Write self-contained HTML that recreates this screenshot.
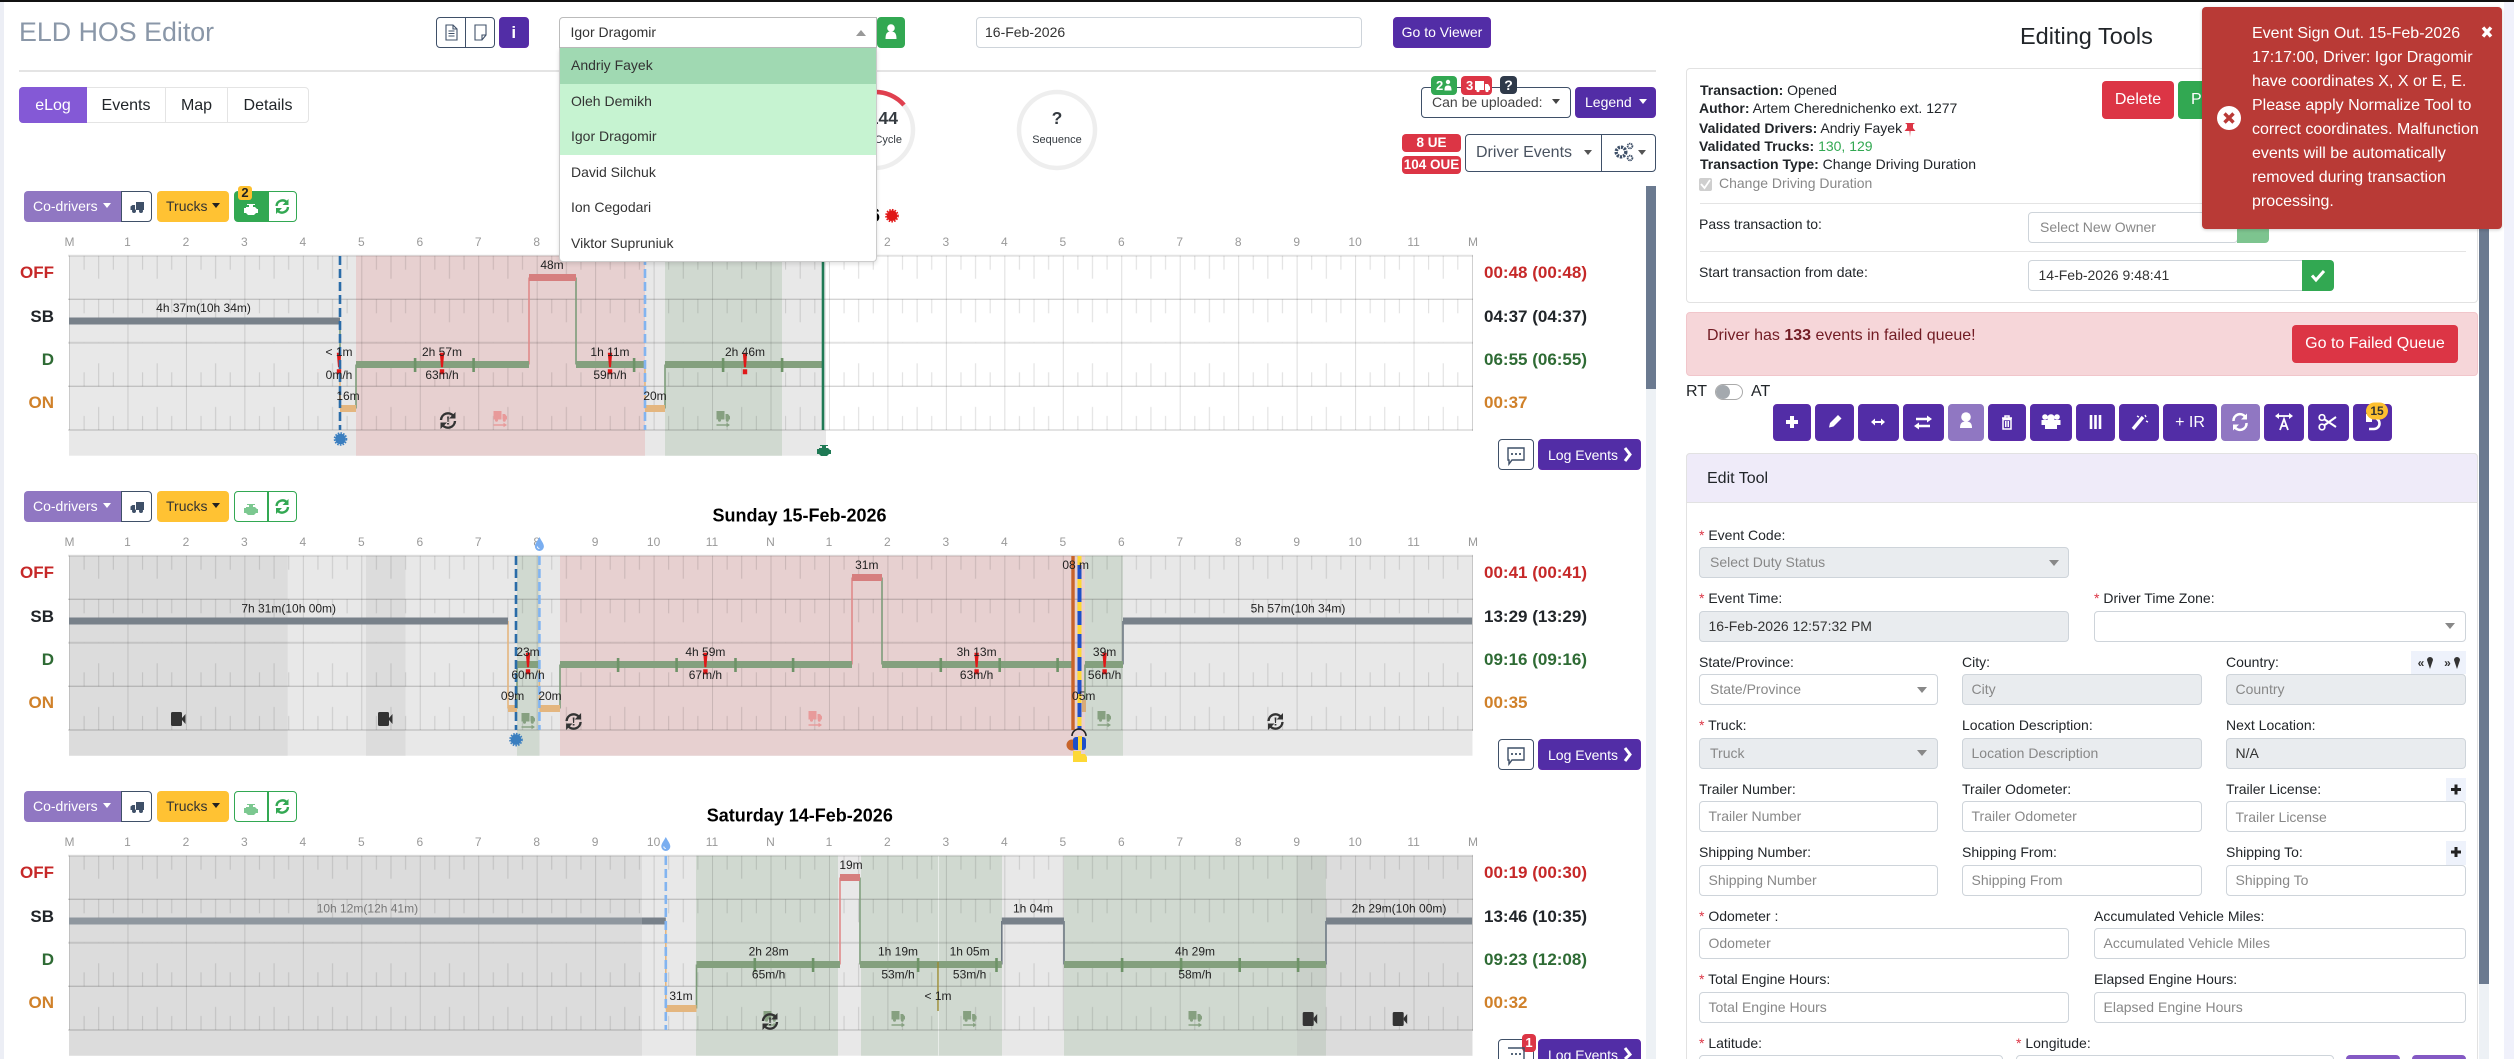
<!DOCTYPE html>
<html><head><meta charset="utf-8"><title>ELD HOS Editor</title>
<style>
html,body{margin:0;padding:0;width:2514px;height:1059px;overflow:hidden}
body{position:relative;background:#fff;font:14px/20px "Liberation Sans",sans-serif;color:#212529}
div,span.a{position:absolute;box-sizing:border-box;white-space:nowrap}
#page{left:0;top:0;width:2514px;height:1059px;overflow:hidden;background:#fff}
.p{background:#522da6;border:1px solid #5c2aa8;border-radius:4px;color:#fff;text-align:center}
.lp{background:#9077c2;border-color:#9077c2}
.o{border:1.5px solid #3f5068;border-radius:4px;background:#fff}
.r{background:#dc3545;border-radius:4px;color:#fff;text-align:center}
.g{background:#32a852;border-radius:4px;color:#fff}
.cr{width:0;height:0;border-left:4.5px solid transparent;border-right:4.5px solid transparent;border-top:5px solid #fff}
.cu{width:0;height:0;border-left:5px solid transparent;border-right:5px solid transparent;border-bottom:6px solid #999}
.cg{width:0;height:0;border-left:5px solid transparent;border-right:5px solid transparent;border-top:6px solid #888}
.f{border:1.5px solid #ced4da;border-radius:4px;height:31px;line-height:29.5px;padding-left:8.5px;color:#888;background:#fff}
.d{background:#e9ecef}
.sel{padding-left:10px}
.dk{color:#333}
.l{height:20px}
.l i{color:#dc3545;font-style:normal}
.opt{left:0;width:100%;height:35.5px;line-height:35px;padding-left:11px;color:#333}
svg{position:absolute;left:0;top:0}
.sb{stroke:#78818a;stroke-width:7;fill:none}
.dr{stroke:#84a07e;stroke-width:7;fill:none}
.of{stroke:#d67e7e;stroke-width:7;fill:none}
.on{stroke:#e4b67f;stroke-width:7;fill:none}
.vd{stroke:#7d9c7a;stroke-width:1.6;fill:none}
.vo{stroke:#e08a8a;stroke-width:1.6;fill:none}
.vn{stroke:#e4b67f;stroke-width:1.6;fill:none}
.vs{stroke:#6f7a84;stroke-width:1.6;fill:none}
.t text,text.t{font:12px "Liberation Sans",sans-serif;fill:#222;text-anchor:middle}
.h text{font:12px "Liberation Sans",sans-serif;fill:#999;text-anchor:middle}
.ti{font:bold 18px "Liberation Sans",sans-serif;fill:#000;text-anchor:middle}
.rl text{font:bold 17px "Liberation Sans",sans-serif;text-anchor:end}
.tl text{font:bold 17px "Liberation Sans",sans-serif}
</style></head><body>
<div id="page">

<svg width="2514" height="1059" viewBox="0 0 2514 1059" style="z-index:1">
<defs>
<pattern id="pt" patternUnits="userSpaceOnUse" x="69" y="255.7" width="58.458" height="43.6">
<rect x="0" y="0" width="1" height="43.6" fill="#000" opacity=".13"/>
<rect x="14.6" y="0" width="1" height="14" fill="#000" opacity=".13"/>
<rect x="29.2" y="0" width="1" height="23" fill="#000" opacity=".13"/>
<rect x="43.8" y="0" width="1" height="14" fill="#000" opacity=".13"/>
</pattern>
<pattern id="pb" patternUnits="userSpaceOnUse" x="69" y="342.7" width="58.458" height="43.65">
<rect x="0" y="0" width="1" height="43.65" fill="#000" opacity=".13"/>
<rect x="14.6" y="29.6" width="1" height="14" fill="#000" opacity=".13"/>
<rect x="29.2" y="20.6" width="1" height="23" fill="#000" opacity=".13"/>
<rect x="43.8" y="29.6" width="1" height="14" fill="#000" opacity=".13"/>
</pattern>
<g id="grid">
<rect x="69" y="255.7" width="1403.5" height="87" fill="url(#pt)"/>
<rect x="69" y="342.7" width="1403.5" height="87.3" fill="url(#pb)"/>
<path d="M68 255.7H1473M68 430H1473M68 342.7H1473" stroke="#000" stroke-opacity=".11" stroke-width="2" fill="none"/>
<path d="M68 299.3H1473M68 386.3H1473" stroke="#000" stroke-opacity=".17" stroke-width="1.3" fill="none"/>
<path d="M1472.5 255V431" stroke="#000" stroke-opacity=".13" stroke-width="1" fill="none"/>
</g>
<g id="tr"><path d="M-6.5-8H1.5V0.500H-6.5ZM2.500-5H5L7-2.500V0.500H2.500Z"/><circle cx="-3.5" cy="1.200" r="1.500"/><circle cx="4.300" cy="1.200" r="1.500"/><path d="M-6.5 6H5" stroke-width="1.400" fill="none" stroke="currentColor"/><path d="M3.500 3.800 7 6 3.500 8.200Z"/></g>
<g id="sy"><path d="M-7-.5A7 7 0 0 1 5.5-4.5M7 .5A7 7 0 0 1-5.5 4.5" fill="none" stroke="#333" stroke-width="2.4"/><path d="M7.5-8.5V-2H1ZM-7.5 8.5V2H-1Z" fill="#333"/><path d="M-.9-4H.9L.5 1.5H-.5ZM-.9 2.5H.9V4H-.9Z" fill="#333"/></g>
<g id="cam"><rect x="-7" y="-7" width="11" height="14" rx="1.5" fill="#333"/><path d="M4-1 7.5-5V5L4 1Z" fill="#333"/></g>
<g id="ex"><path d="M-2.2 97H2.2L1 111.5H-1ZM-2.2 113.5H2.2V118.5H-2.2Z" fill="#e01818" transform="translate(0,255.7)"/></g>
<g id="mk"><rect x="-1.2" y="358" width="2.6" height="14" fill="#6e9368"/></g>
<g id="eng"><path d="M-7-2H-5V-3H-2V-5H-4V-6H4V-5H2V-3H4L6-1H7V3H5L3 5H-3L-5 3H-7Z"/></g>
<g id="drop"><path d="M0-9C2-5 4.5-2.5 4.5.5A4.5 4.5 0 0 1-4.5.5C-4.5-2.5-2-5 0-9Z" fill="#7aaef0"/><path d="M-2 .5A2 2 0 0 0 0 2.5" stroke="#fff" stroke-width="1" fill="none"/></g>
<g id="dot"><circle r="5.3"/><circle r="6" fill="none" stroke="currentColor" stroke-width="1.6" stroke-dasharray="1.6 1.2"/></g>
</defs>

<!-- CHART 1 -->
<g>
<rect x="69" y="255.7" width="757" height="200" fill="#e8e8e8"/>
<rect x="356" y="255.7" width="289" height="200" fill="#e7d0d0"/>
<rect x="665" y="255.7" width="117" height="200" fill="#d0d9d0"/>
<use href="#grid"/>
<g class="h"><text x="69.5" y="246">M</text><text x="127.5" y="246">1</text><text x="186" y="246">2</text><text x="244.4" y="246">3</text><text x="302.8" y="246">4</text><text x="361.3" y="246">5</text><text x="419.8" y="246">6</text><text x="478.2" y="246">7</text><text x="536.7" y="246">8</text><text x="595.1" y="246">9</text><text x="653.6" y="246">10</text><text x="712" y="246">11</text><text x="770.5" y="246">N</text><text x="829" y="246">1</text><text x="887.4" y="246">2</text><text x="945.9" y="246">3</text><text x="1004.3" y="246">4</text><text x="1062.8" y="246">5</text><text x="1121.3" y="246">6</text><text x="1179.7" y="246">7</text><text x="1238.2" y="246">8</text><text x="1296.7" y="246">9</text><text x="1355.1" y="246">10</text><text x="1413.6" y="246">11</text><text x="1473" y="246">M</text></g>
<text x="880" y="221.5" style="font:bold 18px 'Liberation Sans',sans-serif;text-anchor:end">Monday 16-Feb-2026</text>
<use href="#dot" x="892" y="215.7" fill="#e01818" color="#e01818"/>
<path class="vd" d="M340 321V364.5"/><path class="vn" d="M340 364.5V408.5"/><path class="vd" d="M356 408.5V364.5"/><path class="vo" d="M529 364.5V277.5"/><path class="vd" d="M576 277.5V364.5"/><path class="vn" d="M645 364.5V408.5"/><path class="vd" d="M665 408.5V364.5"/>
<path class="sb" d="M69 321H340"/><path class="on" d="M340 408.5H356"/><path class="dr" d="M356 364.5H529"/><path class="of" d="M529 277.5H576"/><path class="dr" d="M576 364.5H645"/><path class="on" d="M645 408.5H665"/><path class="dr" d="M665 364.5H824"/>
<use href="#mk" x="415"/><use href="#mk" x="473.5"/><use href="#mk" x="634"/><use href="#mk" x="723"/><use href="#mk" x="782"/>
<use href="#ex" x="339"/><use href="#ex" x="442"/><use href="#ex" x="610"/><use href="#ex" x="745"/>
<path d="M340 256V430" stroke="#2a6ca8" stroke-width="2.6" stroke-dasharray="9 4" fill="none"/>
<path d="M645 256V430" stroke="#82b4f0" stroke-width="2.6" stroke-dasharray="9 4" fill="none"/>
<path d="M823 256V430" stroke="#1f7a55" stroke-width="2.6" fill="none"/>
<use href="#dot" x="340.5" y="439" fill="#3a7ebf" color="#3a7ebf"/>
<use href="#sy" x="448" y="420.5"/>
<use href="#tr" x="500" y="419" fill="#e89a9a" color="#e89a9a"/>
<use href="#tr" x="723" y="419" fill="#86a080" color="#86a080"/>
<use href="#eng" x="824" y="451" fill="#1f7a55"/>
<g class="t"><text x="203.5" y="312">4h 37m(10h 34m)</text><text x="552" y="269">48m</text><text x="339" y="356">&lt; 1m</text><text x="339" y="379">0m/h</text><text x="442" y="356">2h 57m</text><text x="442" y="379">63m/h</text><text x="610" y="356">1h 11m</text><text x="610" y="379">59m/h</text><text x="745" y="356">2h 46m</text><text x="348" y="400">16m</text><text x="655" y="400">20m</text></g>
<g class="rl"><text x="54" y="278" fill="#c62828">OFF</text><text x="54" y="322" fill="#212529">SB</text><text x="54" y="365" fill="#2e6b34">D</text><text x="54" y="408" fill="#d0812a">ON</text></g>
<g class="tl"><text x="1484" y="278" fill="#c62828">00:48 (00:48)</text><text x="1484" y="322" fill="#212529">04:37 (04:37)</text><text x="1484" y="365" fill="#2e6b34">06:55 (06:55)</text><text x="1484" y="408" fill="#d0812a">00:37</text></g>
</g>

<!-- CHART 2 -->
<g transform="translate(0,300)">
<rect x="69" y="255.7" width="1403.5" height="200" fill="#e8e8e8"/>
<rect x="69" y="255.7" width="218.6" height="200" fill="#dcdcdc"/>
<rect x="366" y="255.7" width="39.5" height="200" fill="#dcdcdc"/>
<rect x="517" y="255.7" width="22.5" height="200" fill="#d0d9d0"/>
<rect x="560" y="255.7" width="525" height="200" fill="#e7d0d0"/>
<rect x="1085" y="255.7" width="38" height="200" fill="#d0d9d0"/>
<use href="#grid"/>
<g class="h"><text x="69.5" y="246">M</text><text x="127.5" y="246">1</text><text x="186" y="246">2</text><text x="244.4" y="246">3</text><text x="302.8" y="246">4</text><text x="361.3" y="246">5</text><text x="419.8" y="246">6</text><text x="478.2" y="246">7</text><text x="536.7" y="246">8</text><text x="595.1" y="246">9</text><text x="653.6" y="246">10</text><text x="712" y="246">11</text><text x="770.5" y="246">N</text><text x="829" y="246">1</text><text x="887.4" y="246">2</text><text x="945.9" y="246">3</text><text x="1004.3" y="246">4</text><text x="1062.8" y="246">5</text><text x="1121.3" y="246">6</text><text x="1179.7" y="246">7</text><text x="1238.2" y="246">8</text><text x="1296.7" y="246">9</text><text x="1355.1" y="246">10</text><text x="1413.6" y="246">11</text><text x="1473" y="246">M</text></g>
<text class="ti" x="799.5" y="221.5">Sunday 15-Feb-2026</text>
<path class="vn" d="M508 321V408.5"/><path class="vd" d="M517 408.5V364.5"/><path class="vn" d="M539.4 364.5V408.5"/><path class="vd" d="M560 408.5V364.5"/><path class="vo" d="M852 364.5V277.5"/><path class="vd" d="M882 277.5V364.5"/><path class="vd" d="M1085 364.5V408.5"/><path class="vs" d="M1123 364.5V321"/>
<path class="sb" d="M69 321H508"/><path class="on" d="M508 408.5H517"/><path class="dr" d="M517 364.5H539.4"/><path class="on" d="M539.4 408.5H560"/><path class="dr" d="M560 364.5H852"/><path class="of" d="M852 277.5H882"/><path class="dr" d="M882 364.5H1072"/><path class="dr" d="M1085 364.5H1123"/><path class="sb" d="M1123 321H1472"/>
<rect x="1082" y="400" width="4" height="12" fill="#d8ac78"/>
<use href="#mk" x="618"/><use href="#mk" x="676.5"/><use href="#mk" x="735.4"/><use href="#mk" x="793"/><use href="#mk" x="940.7"/><use href="#mk" x="999.6"/><use href="#mk" x="1057.5"/>
<use href="#ex" x="528"/><use href="#ex" x="705.4"/><use href="#ex" x="976.6"/><use href="#ex" x="1104.6"/>
<path d="M516 256V430" stroke="#2a6ca8" stroke-width="2.6" stroke-dasharray="9 4" fill="none"/>
<path d="M539.4 256V430" stroke="#82b4f0" stroke-width="2.6" stroke-dasharray="9 4" fill="none"/>
<path d="M1073 256V430" stroke="#c8642a" stroke-width="3.4" fill="none"/>
<path d="M1079.5 256V430" stroke="#fdd835" stroke-width="4" fill="none"/>
<path d="M1079.5 256V430" stroke="#1e50c8" stroke-width="4" stroke-dasharray="14 9" stroke-dashoffset="-9" fill="none"/>
<use href="#drop" x="539.4" y="246"/>
<use href="#dot" x="516" y="439.6" fill="#3a7ebf" color="#3a7ebf"/>
<use href="#cam" x="178" y="419"/><use href="#cam" x="385" y="419"/>
<use href="#tr" x="528" y="421" fill="#86a080" color="#86a080"/>
<use href="#sy" x="573.6" y="421.5"/><use href="#sy" x="1275.5" y="421.5"/>
<use href="#tr" x="815" y="419" fill="#e89a9a" color="#e89a9a"/>
<use href="#tr" x="1104" y="419" fill="#86a080" color="#86a080"/>
<circle cx="1072" cy="445" r="5.5" fill="#c8642a"/>
<rect x="1073" y="437" width="13" height="13" rx="3" fill="#1e50c8"/><rect x="1078" y="436" width="4" height="14" fill="#fdd835"/>
<path d="M1072 436a4 4 0 0 1 14 0" stroke="#222" stroke-width="1.6" fill="none"/>
<path d="M1073 451H1081V454H1085L1087 457V462H1073Z" fill="#fdd835"/>
<g class="t"><text x="288.7" y="312.5">7h 31m(10h 00m)</text><text x="528" y="356">23m</text><text x="528" y="379">60m/h</text><text x="512.6" y="400">09m</text><text x="550" y="400">20m</text><text x="705.4" y="356">4h 59m</text><text x="705.4" y="379">67m/h</text><text x="866.8" y="269">31m</text><text x="976.6" y="356">3h 13m</text><text x="976.6" y="379">63m/h</text><text x="1075.7" y="269">08 m</text><text x="1104.6" y="356">39m</text><text x="1104.6" y="379">56m/h</text><text x="1083.7" y="400">05m</text><text x="1298" y="312.5">5h 57m(10h 34m)</text></g>
<g class="rl"><text x="54" y="278" fill="#c62828">OFF</text><text x="54" y="322" fill="#212529">SB</text><text x="54" y="365" fill="#2e6b34">D</text><text x="54" y="408" fill="#d0812a">ON</text></g>
<g class="tl"><text x="1484" y="278" fill="#c62828">00:41 (00:41)</text><text x="1484" y="322" fill="#212529">13:29 (13:29)</text><text x="1484" y="365" fill="#2e6b34">09:16 (09:16)</text><text x="1484" y="408" fill="#d0812a">00:35</text></g>
</g>

<!-- CHART 3 -->
<g transform="translate(0,600)">
<rect x="69" y="255.7" width="1403.5" height="200" fill="#e8e8e8"/>
<rect x="69" y="255.7" width="573" height="200" fill="#dcdcdc"/>
<rect x="696" y="255.7" width="142" height="200" fill="#d0d9d0"/>
<rect x="861" y="255.7" width="141" height="200" fill="#d0d9d0"/>
<rect x="1064" y="255.7" width="233" height="200" fill="#d0d9d0"/>
<rect x="1297" y="255.7" width="29" height="200" fill="#c9d0c9"/>
<rect x="1326" y="255.7" width="146.5" height="200" fill="#dcdcdc"/>
<rect x="938" y="255.7" width="1" height="200" fill="#e8ece8"/>
<use href="#grid"/>
<g class="h"><text x="69.5" y="246">M</text><text x="127.5" y="246">1</text><text x="186" y="246">2</text><text x="244.4" y="246">3</text><text x="302.8" y="246">4</text><text x="361.3" y="246">5</text><text x="419.8" y="246">6</text><text x="478.2" y="246">7</text><text x="536.7" y="246">8</text><text x="595.1" y="246">9</text><text x="653.6" y="246">10</text><text x="712" y="246">11</text><text x="770.5" y="246">N</text><text x="829" y="246">1</text><text x="887.4" y="246">2</text><text x="945.9" y="246">3</text><text x="1004.3" y="246">4</text><text x="1062.8" y="246">5</text><text x="1121.3" y="246">6</text><text x="1179.7" y="246">7</text><text x="1238.2" y="246">8</text><text x="1296.7" y="246">9</text><text x="1355.1" y="246">10</text><text x="1413.6" y="246">11</text><text x="1473" y="246">M</text></g>
<text class="ti" x="799.8" y="221.5">Saturday 14-Feb-2026</text>
<path class="vn" d="M665.8 321V408.5"/><path class="vd" d="M696.5 408.5V364.5"/><path class="vo" d="M840 364.5V277.5"/><path class="vd" d="M860 277.5V364.5"/><path class="vs" d="M1001.8 364.5V321"/><path class="vs" d="M1064 321V364.5"/><path class="vs" d="M1326 364.5V321"/>
<path class="sb" d="M69 321H642" style="stroke:#8f979f"/><path class="sb" d="M642 321H665.8"/><path class="on" d="M665.8 408.5H696.5"/><path class="dr" d="M696.5 364.5H840"/><path class="of" d="M840 277.5H860"/><path class="dr" d="M860 364.5H1001.8"/><path class="sb" d="M1001.8 321H1064"/><path class="dr" d="M1064 364.5H1326"/><path class="sb" d="M1326 321H1472"/>
<path d="M938 362V411" stroke="#9a8a30" stroke-width="1.4" fill="none"/>
<use href="#mk" x="754.7"/><use href="#mk" x="813"/><use href="#mk" x="918"/><use href="#mk" x="996.4"/><use href="#mk" x="1122"/><use href="#mk" x="1181"/><use href="#mk" x="1239.6"/><use href="#mk" x="1298"/>
<path d="M665.8 256V430" stroke="#82b4f0" stroke-width="2.6" stroke-dasharray="9 4" fill="none"/>
<use href="#drop" x="665.8" y="246"/>
<use href="#tr" x="770" y="419" fill="#86a080" color="#86a080"/>
<use href="#sy" x="770" y="421.5"/>
<use href="#tr" x="898" y="419" fill="#86a080" color="#86a080"/><use href="#tr" x="969.6" y="419" fill="#86a080" color="#86a080"/><use href="#tr" x="1195" y="419" fill="#86a080" color="#86a080"/>
<use href="#cam" x="1309.7" y="419"/><use href="#cam" x="1399.7" y="419"/>
<g class="t"><text x="367.4" y="312.7" style="fill:#777">10h 12m(12h 41m)</text><text x="768.6" y="355.6">2h 28m</text><text x="768.6" y="378.6">65m/h</text><text x="681" y="400">31m</text><text x="851" y="269">19m</text><text x="898" y="355.6">1h 19m</text><text x="898" y="378.6">53m/h</text><text x="969.6" y="355.6">1h 05m</text><text x="969.6" y="378.6">53m/h</text><text x="938" y="400">&lt; 1m</text><text x="1033" y="312.7">1h 04m</text><text x="1195" y="355.6">4h 29m</text><text x="1195" y="378.6">58m/h</text><text x="1399" y="312.7">2h 29m(10h 00m)</text></g>
<g class="rl"><text x="54" y="278" fill="#c62828">OFF</text><text x="54" y="322" fill="#212529">SB</text><text x="54" y="365" fill="#2e6b34">D</text><text x="54" y="408" fill="#d0812a">ON</text></g>
<g class="tl"><text x="1484" y="278" fill="#c62828">00:19 (00:30)</text><text x="1484" y="322" fill="#212529">13:46 (10:35)</text><text x="1484" y="365" fill="#2e6b34">09:23 (12:08)</text><text x="1484" y="408" fill="#d0812a">00:32</text></g>
</g>
</svg>

<!-- frame -->
<div style="left:0;top:0;width:2514px;height:2px;background:#111;z-index:9"></div>
<div style="left:0;top:2px;width:3.5px;height:1057px;background:#eceef5"></div>
<div style="left:2504px;top:2px;width:10px;height:1057px;background:#f0f1fb"></div>
<div style="left:1646px;top:186px;width:10px;height:873px;background:#edf1f5"></div>
<div style="left:1646px;top:186px;width:10px;height:203px;background:#6b7a90"></div>
<div style="left:2479px;top:60px;width:10px;height:999px;background:#edf1f5"></div>
<div style="left:2479px;top:60px;width:10px;height:924px;background:#6b7a90"></div>

<!-- header -->
<div style="left:19px;top:12px;height:40px;line-height:40px;font-size:26.8px;color:#8a97a8">ELD HOS Editor</div>
<div style="left:19px;top:70px;width:1637px;height:2px;background:#e4e4e4"></div>
<div class="o" style="left:436px;top:17px;width:29.5px;height:31px;border-radius:4px 0 0 4px"></div>
<div class="o" style="left:465px;top:17px;width:29.5px;height:31px;border-radius:0 4px 4px 0"></div>
<div class="p" style="left:498.7px;top:17px;width:30px;height:31px;line-height:29px;font-weight:bold;font-size:17px">i</div>
<div class="f dk" style="left:559px;top:17px;width:318px;padding-left:10.5px;border-radius:4px 0 0 0;border-color:#bbb">Igor Dragomir</div>
<div class="cu" style="left:856px;top:30px"></div>
<div class="g" style="left:877px;top:17px;width:28px;height:31px"></div>
<div class="f dk" style="left:976px;top:17px;width:386px;padding-left:8px">16-Feb-2026</div>
<div class="p" style="left:1393px;top:17px;width:98px;height:31px;line-height:28px">Go to Viewer</div>

<!-- tabs -->
<div style="left:19px;top:87px;width:290px;height:36px;border:1.5px solid #e4e4e4;border-radius:4px"></div>
<div style="left:19px;top:87px;width:68px;height:36px;background:#8459d6;color:#fff;font-size:16px;line-height:37px;text-align:center;border-radius:4px 0 0 4px">eLog</div>
<div style="left:87px;top:87px;width:79px;height:36px;font-size:16px;line-height:37px;text-align:center;border-right:1.5px solid #e4e4e4">Events</div>
<div style="left:166px;top:87px;width:62px;height:36px;font-size:16px;line-height:37px;text-align:center;border-right:1.5px solid #e4e4e4">Map</div>
<div style="left:228px;top:87px;width:80px;height:36px;font-size:16px;line-height:37px;text-align:center">Details</div>

<!-- top-right of left pane -->
<div class="o" style="left:1421px;top:87px;width:150px;height:31px;line-height:29px;padding-left:10px;color:#444;z-index:1">Can be uploaded:</div>
<div class="cr" style="left:1552px;top:99px;border-top-color:#444;z-index:1"></div>
<div class="p" style="left:1575px;top:87px;width:81px;height:31px;line-height:29px;text-align:left;padding-left:9px">Legend</div>
<div class="cr" style="left:1639px;top:99px"></div>
<div class="g" style="left:1431px;top:76px;width:26px;height:19px;line-height:19px;padding-left:5px;font-weight:bold;font-size:13px;z-index:2">2</div>
<div class="r" style="left:1461px;top:76px;width:31px;height:19px;line-height:19px;padding-left:5px;text-align:left;font-weight:bold;font-size:13px;z-index:2">3</div>
<div style="left:1500px;top:76px;width:17px;height:18px;line-height:18px;background:#2f3a4a;color:#fff;border-radius:4px;text-align:center;font-weight:bold;z-index:2">?</div>
<div class="r" style="left:1402px;top:134px;width:59px;height:18px;line-height:18px;font-weight:bold;font-size:13.5px">8 UE</div>
<div class="r" style="left:1402px;top:156px;width:59px;height:18px;line-height:18px;font-weight:bold;font-size:13.5px">104 OUE</div>
<div class="o" style="left:1465px;top:134px;width:137.5px;height:38px;line-height:35px;padding-left:10px;font-size:16px;color:#4a5360;border-radius:4px 0 0 4px">Driver Events</div>
<div class="cr" style="left:1584px;top:150px;border-top-color:#555"></div>
<div class="o" style="left:1601px;top:134px;width:54.5px;height:38px;border-radius:0 4px 4px 0"></div>
<div class="cr" style="left:1638px;top:150px;border-top-color:#555"></div>

<!-- toolbars -->
<div style="left:24px;top:191px;width:97px;height:31px;line-height:30px;padding-left:9px;background:#9077c2;color:#fff;border-radius:4px 0 0 4px">Co-drivers</div>
<div class="cr" style="left:103px;top:203px"></div>
<div class="o" style="left:120.5px;top:191px;width:31.5px;height:31px;border-radius:0 4px 4px 0"></div>
<div style="left:157px;top:191px;width:72px;height:31px;line-height:30px;padding-left:9px;background:#ffc233;color:#333;border-radius:4px">Trucks</div>
<div class="cr" style="left:212px;top:203px;border-top-color:#222"></div>
<div style="left:234px;top:191px;width:34px;height:31px;background:#32a852;border-radius:4px 0 0 4px"></div>
<div style="left:267.5px;top:191px;width:29.5px;height:31px;background:#fff;border:1px solid #32a852;border-radius:0 4px 4px 0"></div>
<div style="left:238px;top:186px;width:14px;height:14px;line-height:14px;background:#fdc030;color:#222;font-weight:bold;text-align:center;font-size:13px;border-radius:3px">2</div>

<div style="left:24px;top:491px;width:97px;height:31px;line-height:30px;padding-left:9px;background:#9077c2;color:#fff;border-radius:4px 0 0 4px">Co-drivers</div>
<div class="cr" style="left:103px;top:503px"></div>
<div class="o" style="left:120.5px;top:491px;width:31.5px;height:31px;border-radius:0 4px 4px 0"></div>
<div style="left:157px;top:491px;width:72px;height:31px;line-height:30px;padding-left:9px;background:#ffc233;color:#333;border-radius:4px">Trucks</div>
<div class="cr" style="left:212px;top:503px;border-top-color:#222"></div>
<div style="left:234px;top:491px;width:34px;height:31px;background:#fff;border:1px solid #32a852;border-radius:4px 0 0 4px"></div>
<div style="left:267.5px;top:491px;width:29.5px;height:31px;background:#fff;border:1px solid #32a852;border-radius:0 4px 4px 0"></div>

<div style="left:24px;top:791px;width:97px;height:31px;line-height:30px;padding-left:9px;background:#9077c2;color:#fff;border-radius:4px 0 0 4px">Co-drivers</div>
<div class="cr" style="left:103px;top:803px"></div>
<div class="o" style="left:120.5px;top:791px;width:31.5px;height:31px;border-radius:0 4px 4px 0"></div>
<div style="left:157px;top:791px;width:72px;height:31px;line-height:30px;padding-left:9px;background:#ffc233;color:#333;border-radius:4px">Trucks</div>
<div class="cr" style="left:212px;top:803px;border-top-color:#222"></div>
<div style="left:234px;top:791px;width:34px;height:31px;background:#fff;border:1px solid #32a852;border-radius:4px 0 0 4px"></div>
<div style="left:267.5px;top:791px;width:29.5px;height:31px;background:#fff;border:1px solid #32a852;border-radius:0 4px 4px 0"></div>

<!-- log buttons -->
<div class="o" style="left:1498px;top:439px;width:36px;height:31px"></div>
<div class="p" style="left:1538px;top:439px;width:103px;height:31px;line-height:30px;text-align:left;padding-left:9px">Log Events</div>
<div class="o" style="left:1498px;top:739px;width:36px;height:31px"></div>
<div class="p" style="left:1538px;top:739px;width:103px;height:31px;line-height:30px;text-align:left;padding-left:9px">Log Events</div>
<div class="o" style="left:1498px;top:1039px;width:36px;height:31px"></div>
<div class="p" style="left:1538px;top:1039px;width:103px;height:31px;line-height:30px;text-align:left;padding-left:9px">Log Events</div>
<div class="r" style="left:1522px;top:1034px;width:14px;height:18px;line-height:18px;font-weight:bold;font-size:13px;z-index:3">1</div>

<!-- right panel -->
<div style="left:2020px;top:20px;height:32px;line-height:32px;font-size:23.5px;color:#212529">Editing Tools</div>
<div style="left:1686px;top:68px;width:792px;height:235px;border:1.5px solid #e2e2e2;border-radius:4px"></div>
<div class="l" style="left:1700px;top:80px"><b>Transaction:</b> Opened</div>
<div class="l" style="left:1699px;top:98px"><b>Author:</b> Artem Cherednichenko ext. 1277</div>
<div class="l" style="left:1699px;top:118px"><b>Validated Drivers:</b> Andriy Fayek</div>
<div class="l" style="left:1699px;top:136px"><b>Validated Trucks:</b> <span style="color:#32a852">130, 129</span></div>
<div class="l" style="left:1700px;top:154px"><b>Transaction Type:</b> Change Driving Duration</div>
<div style="left:1699px;top:178px;width:13px;height:13px;background:#cfcfcf;border-radius:2px"></div>
<div class="l" style="left:1719px;top:173px;color:#888">Change Driving Duration</div>
<div class="r" style="left:2102px;top:81px;width:72px;height:38px;line-height:37px;font-size:16px">Delete</div>
<div class="g" style="left:2178px;top:81px;width:60px;height:38px;line-height:37px;font-size:16px;padding-left:13px">P</div>
<div style="left:1700px;top:202.5px;width:766px;height:1.5px;background:#e4e4e4"></div>
<div class="l" style="left:1699px;top:214px">Pass transaction to:</div>
<div class="f sel" style="left:2028px;top:212px;width:210px;padding-left:11px">Select New Owner</div>
<div style="left:2237px;top:212px;width:32px;height:31px;background:#7dc48f;border-radius:0 4px 4px 0"></div>
<div style="left:1700px;top:250.5px;width:766px;height:1.5px;background:#e4e4e4"></div>
<div class="l" style="left:1699px;top:262px">Start transaction from date:</div>
<div class="f dk" style="left:2028px;top:260px;width:275px;padding-left:9.5px;border-radius:4px 0 0 4px">14-Feb-2026 9:48:41</div>
<div class="g" style="left:2302px;top:260px;width:32px;height:31px;border-radius:0 4px 4px 0"></div>

<div style="left:1686px;top:312px;width:792px;height:64px;background:#f6d6d9;border:1px solid #f1c6cb;border-radius:4px"></div>
<div style="left:1707px;top:324px;height:24px;line-height:24px;font-size:16px;color:#721c24">Driver has <b>133</b> events in failed queue!</div>
<div class="r" style="left:2292px;top:325px;width:166px;height:38px;line-height:37px;font-size:16px">Go to Failed Queue</div>

<div style="left:1686px;top:380px;height:24px;line-height:24px;font-size:16px">RT</div>
<div style="left:1715px;top:384px;width:28px;height:16px;border:1px solid #aaa;border-radius:8px;background:#fff"></div>
<div style="left:1716px;top:385px;width:14px;height:14px;border-radius:7px;background:#a4a9ae"></div>
<div style="left:1751px;top:380px;height:24px;line-height:24px;font-size:16px">AT</div>

<div class="p" style="left:1773px;top:404px;width:38px;height:37px"></div>
<div class="p" style="left:1815px;top:404px;width:39px;height:37px"></div>
<div class="p" style="left:1858px;top:404px;width:41px;height:37px"></div>
<div class="p" style="left:1903px;top:404px;width:41px;height:37px"></div>
<div class="p lp" style="left:1948px;top:404px;width:36px;height:37px"></div>
<div class="p" style="left:1988px;top:404px;width:38px;height:37px"></div>
<div class="p" style="left:2030px;top:404px;width:42px;height:37px"></div>
<div class="p" style="left:2076px;top:404px;width:39px;height:37px"></div>
<div class="p" style="left:2119px;top:404px;width:40px;height:37px"></div>
<div class="p" style="left:2163px;top:404px;width:54px;height:37px;line-height:35px;font-size:16px">+ IR</div>
<div class="p lp" style="left:2221px;top:404px;width:39px;height:37px"></div>
<div class="p" style="left:2264px;top:404px;width:40px;height:37px"></div>
<div class="p" style="left:2308px;top:404px;width:41px;height:37px"></div>
<div class="p" style="left:2353px;top:404px;width:39px;height:37px"></div>

<div style="left:1686px;top:453px;width:792px;height:620px;border:1.5px solid #e2e2e2;border-radius:4px"></div>
<div style="left:1686px;top:453px;width:792px;height:50px;background:#efebf9;border:1.5px solid #e2e2e2;border-radius:4px 4px 0 0;line-height:49px;padding-left:20px;font-size:16px">Edit Tool</div>

<div class="l" style="left:1699px;top:525px"><i>*</i> Event Code:</div>
<div class="f d sel" style="left:1699px;top:547px;width:370px">Select Duty Status</div><div class="cg" style="left:2049px;top:560px"></div>
<div class="l" style="left:1699px;top:588px"><i>*</i> Event Time:</div>
<div class="f d dk" style="left:1699px;top:611px;width:370px">16-Feb-2026 12:57:32 PM</div>
<div class="l" style="left:2094px;top:588px"><i>*</i> Driver Time Zone:</div>
<div class="f" style="left:2094px;top:611px;width:372px"></div><div class="cg" style="left:2445px;top:623px"></div>

<div class="l" style="left:1699px;top:652px">State/Province:</div>
<div class="f sel" style="left:1699px;top:674px;width:238.5px">State/Province</div><div class="cg" style="left:1917px;top:687px"></div>
<div class="l" style="left:1962px;top:652px">City:</div>
<div class="f d" style="left:1962px;top:674px;width:240px">City</div>
<div class="l" style="left:2226px;top:652px">Country:</div>
<div style="left:2411px;top:651px;width:55px;height:23px;background:#eef2fb"></div>
<div class="f d" style="left:2226px;top:674px;width:240px">Country</div>

<div class="l" style="left:1699px;top:715px"><i>*</i> Truck:</div>
<div class="f d sel" style="left:1699px;top:738px;width:238.5px">Truck</div><div class="cg" style="left:1917px;top:750px"></div>
<div class="l" style="left:1962px;top:715px">Location Description:</div>
<div class="f d" style="left:1962px;top:738px;width:240px">Location Description</div>
<div class="l" style="left:2226px;top:715px">Next Location:</div>
<div class="f d dk" style="left:2226px;top:738px;width:240px">N/A</div>

<div class="l" style="left:1699px;top:779px">Trailer Number:</div>
<div class="f" style="left:1699px;top:801px;width:238.5px">Trailer Number</div>
<div class="l" style="left:1962px;top:779px">Trailer Odometer:</div>
<div class="f" style="left:1962px;top:801px;width:240px">Trailer Odometer</div>
<div class="l" style="left:2226px;top:779px">Trailer License:</div>
<div style="left:2446px;top:778px;width:20px;height:23px;background:#eef2fb"></div>
<div class="f" style="left:2226px;top:801px;width:240px;line-height:31px">Trailer License</div>

<div class="l" style="left:1699px;top:842px">Shipping Number:</div>
<div class="f" style="left:1699px;top:865px;width:238.5px">Shipping Number</div>
<div class="l" style="left:1962px;top:842px">Shipping From:</div>
<div class="f" style="left:1962px;top:865px;width:240px">Shipping From</div>
<div class="l" style="left:2226px;top:842px">Shipping To:</div>
<div style="left:2446px;top:841px;width:20px;height:24px;background:#eef2fb"></div>
<div class="f" style="left:2226px;top:865px;width:240px">Shipping To</div>

<div class="l" style="left:1699px;top:906px"><i>*</i> Odometer :</div>
<div class="f" style="left:1699px;top:928px;width:370px">Odometer</div>
<div class="l" style="left:2094px;top:906px">Accumulated Vehicle Miles:</div>
<div class="f" style="left:2094px;top:928px;width:372px">Accumulated Vehicle Miles</div>

<div class="l" style="left:1699px;top:969px"><i>*</i> Total Engine Hours:</div>
<div class="f" style="left:1699px;top:992px;width:370px">Total Engine Hours</div>
<div class="l" style="left:2094px;top:969px">Elapsed Engine Hours:</div>
<div class="f" style="left:2094px;top:992px;width:372px">Elapsed Engine Hours</div>

<div class="l" style="left:1699px;top:1033px"><i>*</i> Latitude:</div>
<div class="f" style="left:1699px;top:1055px;width:304px"></div>
<div class="l" style="left:2016px;top:1033px"><i>*</i> Longitude:</div>
<div class="f" style="left:2016px;top:1055px;width:318px"></div>
<div style="left:2346px;top:1055px;width:54px;height:31px;background:#8459c4;border-radius:4px"></div>
<div style="left:2412px;top:1055px;width:54px;height:31px;background:#8459c4;border-radius:4px"></div>

<!-- icon overlay -->
<svg width="2514" height="1059" viewBox="0 0 2514 1059" style="z-index:3">
<circle cx="875" cy="130" r="38" fill="none" stroke="#eee" stroke-width="4.5"/>
<path d="M875 92A38 38 0 0 1 904 105" fill="none" stroke="#e0404f" stroke-width="4.5"/>
<text x="898" y="124" style="font:bold 17.5px 'Liberation Sans',sans-serif;text-anchor:end;fill:#343a40">144</text>
<text x="902" y="143" style="font:11px 'Liberation Sans',sans-serif;text-anchor:end;fill:#343a40">Cycle</text>
<circle cx="1057" cy="130" r="38" fill="none" stroke="#eee" stroke-width="4.5"/>
<text x="1057" y="124" style="font:bold 17.5px 'Liberation Sans',sans-serif;text-anchor:middle;fill:#343a40">?</text>
<text x="1057" y="143" style="font:11px 'Liberation Sans',sans-serif;text-anchor:middle;fill:#343a40">Sequence</text>
<path d="M446 25H453L457 29V40H446ZM453 25V29H457M448.5 31H454.5M448.5 33.5H454.5M448.5 36H454.5" fill="none" stroke="#3f5068" stroke-width="1.1"/>
<path d="M475 25H486V35L482 40H475ZM486 35H482V40" fill="none" stroke="#3f5068" stroke-width="1.1"/>
<circle cx="891" cy="28" r="3.8" fill="#fff"/><path d="M885.5 39C885.5 33 887.5 31.5 891 31.5S896.5 33 896.5 39Z" fill="#fff"/>
<path d="M136 202H144V210H136ZM130.500 210V206.500L132.500 205H135V210Z" fill="#3f5068"/><circle cx="134" cy="211" r="2" fill="#3f5068"/><circle cx="141" cy="211" r="2" fill="#3f5068"/>
<path d="M136 502H144V510H136ZM130.500 510V506.500L132.500 505H135V510Z" fill="#3f5068"/><circle cx="134" cy="511" r="2" fill="#3f5068"/><circle cx="141" cy="511" r="2" fill="#3f5068"/>
<path d="M136 802H144V810H136ZM130.500 810V806.500L132.500 805H135V810Z" fill="#3f5068"/><circle cx="134" cy="811" r="2" fill="#3f5068"/><circle cx="141" cy="811" r="2" fill="#3f5068"/>
<use href="#eng" x="251" y="210" fill="#fff"/>
<use href="#eng" x="251" y="510" fill="#7cc890"/>
<use href="#eng" x="251" y="810" fill="#7cc890"/>
<g fill="none" stroke="#32a852" stroke-width="2.4"><path d="M276.5 206A6 6 0 0 1 287 202.5M288 207A6 6 0 0 1 277.5 210.5"/><path d="M276.5 506A6 6 0 0 1 287 502.5M288 507A6 6 0 0 1 277.5 510.5"/><path d="M276.5 806A6 6 0 0 1 287 802.5M288 807A6 6 0 0 1 277.5 810.5"/></g>
<path d="M288.5 199V205H282.5ZM276 214V208H282ZM288.5 499V505H282.5ZM276 514V508H282ZM288.5 799V805H282.5ZM276 814V808H282Z" fill="#32a852"/>
<circle cx="1448" cy="82" r="2.2" fill="#fff"/><path d="M1444.5 90.500C1444.5 86.500 1445.500 85.500 1448 85.500S1451.500 86.500 1451.500 90.500Z" fill="#fff"/>
<path d="M1475 81H1484V90H1475ZM1485 84H1488L1490 87V90H1485Z" fill="#fff"/><circle cx="1478" cy="90.500" r="1.600" fill="#fff"/><circle cx="1487" cy="90.500" r="1.600" fill="#fff"/>
<circle cx="1621" cy="152" r="4.800" fill="none" stroke="#3f5068" stroke-width="3.400" stroke-dasharray="2.200 1"/><circle cx="1630" cy="146" r="2.400" fill="none" stroke="#3f5068" stroke-width="1.800" stroke-dasharray="1.400 .6"/><circle cx="1630" cy="158" r="2.400" fill="none" stroke="#3f5068" stroke-width="1.800" stroke-dasharray="1.400 .6"/>
<g fill="none" stroke="#3f5068" stroke-width="1.400"><path d="M1508 448H1524V460H1512L1509 464V460H1508Z"/><path d="M1508 748H1524V760H1512L1509 764V760H1508Z"/><path d="M1508 1048H1524V1059"/></g>
<path d="M1511 454H1513M1515 454H1517M1519 454H1521M1511 754H1513M1515 754H1517M1519 754H1521M1511 1054H1513M1515 1054H1517M1519 1054H1521" stroke="#3f5068" stroke-width="1.800" fill="none"/>
<path d="M1625 448 1630 454.500 1625 461M1625 748 1630 754.500 1625 761M1625 1048 1630 1054.500 1625 1059" fill="none" stroke="#fff" stroke-width="3"/>
<path d="M1905 123H1915L1913 124.500V128L1915.500 131H1904.500L1907 128V124.500ZM1909.500 131H1910.500L1910 137Z" fill="#dc3545"/>
<path d="M1701 184 1704.500 188 1710 180" fill="none" stroke="#fff" stroke-width="1.800"/>
<path d="M2312 275.500 2316 280 2324 271" fill="none" stroke="#fff" stroke-width="3"/>
<path d="M1792 416V428M1786 422H1798" stroke="#fff" stroke-width="4" fill="none"/>
<path d="M1829 427.500 1830 423 1838 415 1841.500 418.500 1833.500 426.500Z" fill="#fff"/>
<path d="M1873 422H1883" stroke="#fff" stroke-width="2" fill="none"/><path d="M1871 422 1875 418.500V425.500ZM1885 422 1881 418.500V425.500Z" fill="#fff"/>
<path d="M1916 419H1928M1930 426H1918" stroke="#fff" stroke-width="2.400" fill="none"/><path d="M1927 415.500 1932 419 1927 422.500ZM1919 422.500 1914 426 1919 429.500Z" fill="#fff"/>
<circle cx="1966" cy="417" r="4.800" fill="#fff"/><path d="M1960 428C1960 423 1962 421.500 1966 421.500S1972 423 1972 428Z" fill="#fff"/>
<path d="M2002 418H2012M2005 418V416H2009V418M2003 419.500H2011V429H2003Z" stroke="#fff" stroke-width="1.500" fill="none"/><path d="M2005.500 421V427M2007 421V427M2008.500 421V427" stroke="#fff" stroke-width="1" fill="none"/>
<circle cx="2051" cy="418" r="3.800" fill="#fff"/><circle cx="2045" cy="417" r="2.800" fill="#fff"/><circle cx="2057" cy="417" r="2.800" fill="#fff"/><path d="M2041.500 425 2041.500 420H2060.500V425H2057V429H2045V425Z" fill="#fff"/>
<path d="M2091 415V429M2095.500 415V429M2100 415V429" stroke="#fff" stroke-width="2.600" fill="none"/>
<path d="M2133 429 2143 417" stroke="#fff" stroke-width="3.400" fill="none"/><path d="M2137 416 2139 417M2145 415 2146 417M2146 421 2148 422" stroke="#fff" stroke-width="1.400" fill="none"/>
<g fill="none" stroke="#fff" stroke-width="2.600"><path d="M2233.500 421A6.500 6.500 0 0 1 2245 416.500M2246.500 423A6.500 6.500 0 0 1 2235 427.500"/></g><path d="M2247 413.500V419.500H2241ZM2233 430.500V424.500H2239Z" fill="#fff"/>
<path d="M2277 416H2291" stroke="#fff" stroke-width="1.800" fill="none"/><path d="M2275 416 2279 413V419ZM2293 416 2289 413V419Z" fill="#fff"/>
<path d="M2280 430 2284 419 2288 430M2281.500 426H2286.500" stroke="#fff" stroke-width="1.800" fill="none"/>
<circle cx="2322" cy="417.500" r="2.800" fill="none" stroke="#fff" stroke-width="1.700"/><circle cx="2322" cy="427" r="2.800" fill="none" stroke="#fff" stroke-width="1.700"/><path d="M2324 419 2336 427M2324 425.500 2336 417" stroke="#fff" stroke-width="2" fill="none"/>
<path d="M2367 418H2374A5.500 5.500 0 0 1 2374 429H2369" fill="none" stroke="#fff" stroke-width="2.600"/><rect x="2366" y="414" width="6" height="8" fill="#fff"/>
<rect x="2366" y="402.500" width="22" height="17" rx="8.500" fill="#fdc030"/>
<text x="2377" y="415" style="font:bold 12px 'Liberation Sans',sans-serif;text-anchor:middle;fill:#333">15</text>
<text x="2421" y="667" style="font:bold 12px 'Liberation Sans',sans-serif;text-anchor:middle;fill:#333">«</text>
<text x="2447.500" y="667" style="font:bold 12px 'Liberation Sans',sans-serif;text-anchor:middle;fill:#333">»</text>
<path d="M2430 657A3 3 0 0 1 2433 660L2430 669 2427 660A3 3 0 0 1 2430 657Z" fill="#333"/>
<path d="M2457 657A3 3 0 0 1 2460 660L2457 669 2454 660A3 3 0 0 1 2457 657Z" fill="#333"/>
<path d="M2456 784.500V794.500M2451 789.500H2461M2456 847V857M2451 852H2461" stroke="#222" stroke-width="3" fill="none"/>
</svg>

<!-- dropdown -->
<div style="left:559px;top:47.700px;width:318px;height:214px;background:#fff;border:1px solid #ccc;border-top:0;border-radius:0 0 4px 4px;box-shadow:0 2px 4px rgba(0,0,0,.12);z-index:5">
<div class="opt" style="top:0;background:#a0d9b2;height:36.500px">Andriy Fayek</div>
<div class="opt" style="top:36px;background:#c6f3d1">Oleh Demikh</div>
<div class="opt" style="top:71.500px;background:#c6f3d1">Igor Dragomir</div>
<div class="opt" style="top:107px">David Silchuk</div>
<div class="opt" style="top:142.500px">Ion Cegodari</div>
<div class="opt" style="top:178px">Viktor Supruniuk</div>
</div>

<!-- toast -->
<div style="left:2202px;top:7px;width:300px;height:222px;background:#b93a36;border-radius:4px;color:#fff;z-index:6;box-shadow:0 1px 3px rgba(0,0,0,.2)">
<div style="left:50px;top:15px;font-size:16px;line-height:24px">Event Sign Out. 15-Feb-2026<br>17:17:00, Driver: Igor Dragomir<br>have coordinates X, X or E, E.<br>Please apply Normalize Tool to<br>correct coordinates. Malfunction<br>events will be automatically<br>removed during transaction<br>processing.</div>
<svg width="300" height="222" viewBox="0 0 300 222"><circle cx="27" cy="111" r="12" fill="#fff"/><path d="M22.500 106.500 31.500 115.500M31.500 106.500 22.500 115.500" stroke="#b93a36" stroke-width="3.400"/><path d="M281 20.500 289 29.500M289 20.500 281 29.500" stroke="#fff" stroke-width="3.400"/></svg>
</div>
</div>
</body></html>
